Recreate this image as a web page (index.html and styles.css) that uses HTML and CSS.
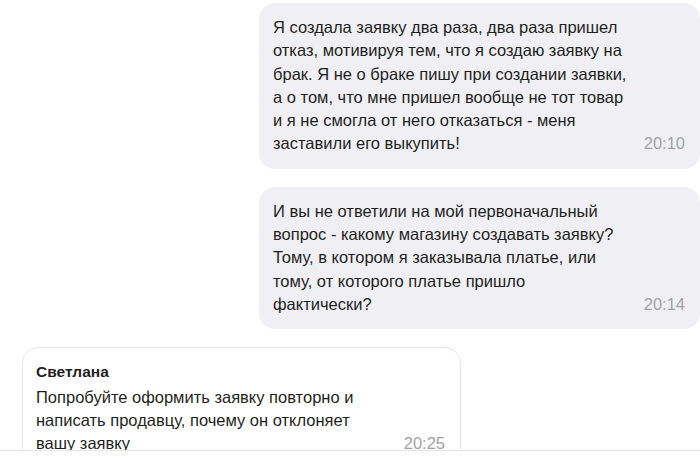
FILE: index.html
```html
<!DOCTYPE html>
<html lang="ru">
<head>
<meta charset="utf-8">
<title>Чат</title>
<link rel="stylesheet" href="styles.css">
</head>
<body>
<div class="app">
  <div class="chat">
    <div class="msg msg-out msg-first">
      <div class="bubble bubble-out">
        <p class="text">Я создала заявку два раза, два раза пришел<br>отказ, мотивируя тем, что я создаю заявку на<br>брак. Я не о браке пишу при создании заявки,<br>а о том, что мне пришел вообще не тот товар<br>и я не смогла от него отказаться - меня<br>заставили его выкупить!</p>
        <span class="time">20:10</span>
      </div>
    </div>
    <div class="msg msg-out">
      <div class="bubble bubble-out">
        <p class="text">И вы не ответили на мой первоначальный<br>вопрос - какому магазину создавать заявку?<br>Тому, в котором я заказывала платье, или<br>тому, от которого платье пришло<br>фактически?</p>
        <span class="time">20:14</span>
      </div>
    </div>
    <div class="msg msg-in">
      <div class="bubble bubble-in">
        <div class="body">
          <div class="author">Светлана</div>
          <p class="text">Попробуйте оформить заявку повторно и<br>написать продавцу, почему он отклоняет<br>вашу заявку</p>
        </div>
        <span class="time">20:25</span>
      </div>
    </div>
  </div>
  <div class="composer"></div>
</div>
</body>
</html>
```
FILE: styles.css
```css
* { box-sizing: border-box; }
html, body { margin: 0; padding: 0; background: #ffffff; }
body {
  font-family: "Liberation Sans", Arial, sans-serif;
  color: #1f1f22;
  width: 700px;
  height: 465px;
  overflow: hidden;
}
.app {
  height: 465px;
  display: flex;
  flex-direction: column;
}
.chat {
  flex: 1;
  overflow: hidden;
  padding: 3px 0 0 22px;
  display: flex;
  flex-direction: column;
  gap: 18px;
}
.msg { display: flex; }
.msg-out { justify-content: flex-end; }
.msg-in { justify-content: flex-start; }
.bubble {
  display: flex;
  align-items: flex-end;
  justify-content: space-between;
  border-radius: 16px;
  font-size: 16.5px;
  line-height: 23.3px;
  flex-shrink: 0;
}
.bubble-out {
  width: 441px;
  background: #f0f0f4;
  padding: 13px 15px 13px 14px;
}
.bubble-in {
  width: 439px;
  background: #ffffff;
  border: 1px solid #e6e6eb;
  padding: 12px 15px 12px 13px;
}
.text { margin: 0; }
.author {
  font-weight: 700;
  font-size: 15.5px;
  line-height: 23.3px;
  margin-bottom: 2px;
}
.time {
  color: #a2a2a8;
  white-space: nowrap;
}
.composer {
  flex: 0 0 15px;
  border-top: 1px solid #e6e6eb;
  background: #ffffff;
}
```
